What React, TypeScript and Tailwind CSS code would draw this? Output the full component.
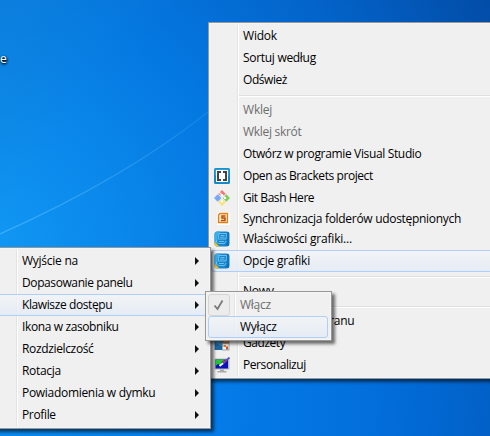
import React from "react";
import { clsx } from "clsx";

type Entry = {
  label: string;
  tracking: string;
  icon?: React.ReactNode;
  disabled?: boolean;
  active?: boolean;
  short?: boolean;
};

function BracketsIcon() {
  return (
    <svg width="16" height="16" viewBox="0 0 16 16">
      <rect width="16" height="16" rx="1.5" fill="#1689cb" />
      <rect x="0.700" y="0.700" width="14.600" height="7" rx="1" fill="#27a2dc" />
      <rect x="2" y="2" width="12" height="12" fill="#fff" />
      <path d="M7 4H4v8h3M9 4h3v8H9" fill="none" stroke="#444" strokeWidth="2" />
    </svg>
  );
}

function GitIcon() {
  return (
    <svg width="16" height="16" viewBox="0 0 16 16">
      <path d="M8 0l3.700 3.700L8 7.400 4.300 3.700z" fill="#f5777a" />
      <path d="M12.300 4.300L16 8l-3.700 3.700L8.600 8z" fill="#7fcb58" />
      <path d="M8 8.600l3.700 3.700L8 16l-3.700-3.700z" fill="#ffdf70" />
      <path d="M3.700 4.300L7.400 8l-3.700 3.700L0 8z" fill="#75a9f9" />
      <path d="M5 2L8 5v7M8 5l3.500 3.500" fill="none" stroke="#f0f0f0" strokeWidth="1.400" />
      <circle cx="8" cy="5.300" r="1.300" fill="#fff" />
      <circle cx="11" cy="8" r="1.300" fill="#fff" />
      <circle cx="8" cy="11.500" r="1.300" fill="#fff" />
    </svg>
  );
}

function SyncIcon() {
  return (
    <svg width="16" height="16" viewBox="0 0 16 16">
      <rect x="3" y="1" width="13" height="13" fill="#fff" />
      <path d="M6 2.500h7.500v9h-9V4z" fill="#ffe9c4" stroke="#e67e14" strokeWidth="1.300" />
      <path d="M11.500 4.900H8v2.200h3v2.300H7" fill="none" stroke="#bd4b0c" strokeWidth="1.500" />
    </svg>
  );
}

function GraphicsIcon() {
  return (
    <svg width="16" height="16" viewBox="0 0 16 16">
      <rect x="0.500" y="0.500" width="15" height="15" rx="3" fill="#1686cf" />
      <path d="M0.500 5V3.500q0-3 3-3H6L3.500 6 3 12l-2.500-1z" fill="#38aee9" />
      <path d="M0.500 10.500L5.500 15.500H3q-2.500 0-2.500-2.500z" fill="#eabf35" />
      <path d="M14 1v14M11.500 14.500l3-3" stroke="#0964ad" strokeWidth="1" />
      <path d="M5 2.500h7.500L12 8H4.300zM6.500 4.500h4M6 6.200h4.500M3 8.500l-.5 2.500 2 1.500h6l1.500-2.500M5 10.500h5" fill="none" stroke="#84cdf2" strokeWidth="0.800" />
    </svg>
  );
}

function GadgetsIcon() {
  return (
    <svg width="16" height="16" viewBox="0 0 16 16">
      <rect x="0.500" y="1" width="11" height="14" fill="#1d659e" />
      <path d="M1 2h7v9L1 8z" fill="#388abb" />
      <rect x="9" y="2" width="6" height="5.500" fill="#ed9653" stroke="#cf6d2c" />
      <rect x="8.500" y="8.500" width="6.500" height="6.500" fill="#eef3f7" stroke="#92a7b5" />
      <rect x="9.500" y="10" width="2.500" height="2" fill="#e87622" />
      <rect x="12" y="11.500" width="2" height="3" fill="#d94a24" />
    </svg>
  );
}

function PersonalizeIcon() {
  return (
    <svg width="16" height="16" viewBox="0 0 16 16">
      <rect x="0.500" y="1.500" width="15" height="11" fill="#b8bab8" />
      <rect x="1.500" y="2.500" width="12.500" height="9" fill="#0c12b5" />
      <path d="M1.500 2.500h9L8 5 6 8 4 7 1.500 9z" fill="#20c633" />
      <path d="M15.500 0.500L9 6.500" stroke="#5d50bd" strokeWidth="1.800" />
      <path d="M10.500 3.500L9 5" stroke="#d83446" strokeWidth="1.800" />
      <path d="M9 6.300L5.500 9" stroke="#fff" strokeWidth="1.800" />
      <path d="M6 12.500h4v1.500h2.500v1.500h-9V14H6z" fill="#a9aaa9" />
    </svg>
  );
}

function Wallpaper() {
  return (
    <svg className="absolute inset-0" width="490" height="436" viewBox="0 0 490 436">
      <defs>
        <radialGradient id="sky" gradientUnits="userSpaceOnUse" cx="-30" cy="250" r="600">
          <stop offset="0" stopColor="#129af5" />
          <stop offset="0.220" stopColor="#0b8aec" />
          <stop offset="0.450" stopColor="#0478e1" />
          <stop offset="0.700" stopColor="#0364ca" />
          <stop offset="1" stopColor="#0249a2" />
        </radialGradient>
        <linearGradient id="corner" gradientUnits="userSpaceOnUse" x1="0" x2="110" y1="0" y2="90">
          <stop offset="0" stopColor="#1484d8" stopOpacity="0.500" />
          <stop offset="1" stopColor="#1484d8" stopOpacity="0" />
        </linearGradient>
        <linearGradient id="floor" gradientUnits="userSpaceOnUse" x1="0" x2="500" y1="400" y2="440">
          <stop offset="0" stopColor="#0a8aee" />
          <stop offset="0.450" stopColor="#047be8" />
          <stop offset="0.750" stopColor="#026edb" />
          <stop offset="1" stopColor="#025fc5" />
        </linearGradient>
        <linearGradient id="streak" x1="0" x2="1" y1="0" y2="0">
          <stop offset="0" stopColor="#46b7fa" stopOpacity="0.800" />
          <stop offset="1" stopColor="#3c9ff0" stopOpacity="0.300" />
        </linearGradient>
      </defs>
      <rect width="490" height="436" fill="url(#sky)" />
      <rect width="490" height="240" fill="url(#corner)" />
      <rect y="370" width="490" height="66" fill="url(#floor)" />
      <path d="M0 234Q125 178 208 112" fill="none" stroke="url(#streak)" strokeWidth="1.300" />
    </svg>
  );
}

function Label({ entry }: { entry: Entry }) {
  return (
    <span className={clsx("whitespace-pre", entry.tracking, entry.disabled ? "text-[#6d6d6d]" : "text-black")}>
      {entry.label}
    </span>
  );
}

function Separator() {
  return (
    <div className="h-2 pt-1 pl-[28px]">
      <div className="h-[2px] border-t border-b border-t-[#e0e0e0] border-b-white" />
    </div>
  );
}

function Gutter({ className }: { className: string }) {
  return <div className={clsx("absolute top-[2px] bottom-[2px] w-[2px] border-r border-l border-r-white border-l-[#e2e3e3]", className)} />;
}

const highlight = "border-[#aecff7] bg-linear-to-b from-[#f2f4f6]/80 to-[#e3ebf7]/80";

const groups: Entry[][] = [
  [
    { label: "Widok", tracking: "tracking-[-0.2px]" },
    { label: "Sortuj według", tracking: "tracking-[-0.3px]" },
    { label: "Odśwież", tracking: "tracking-[-0.45px]" },
  ],
  [
    { label: "Wklej", tracking: "tracking-[-0.2px]", disabled: true },
    { label: "Wklej skrót", tracking: "tracking-[-0.3px]", disabled: true },
    { label: "Otwórz w programie Visual Studio", tracking: "tracking-[-0.35px]" },
    { label: "Open as Brackets project", tracking: "tracking-[-0.42px]", icon: <BracketsIcon /> },
    { label: "Git Bash Here", tracking: "tracking-[-0.45px]", icon: <GitIcon /> },
    { label: "Synchronizacja folderów udostępnionych", tracking: "tracking-[-0.3px]", icon: <SyncIcon />, short: true },
    { label: "Właściwości grafiki...", tracking: "tracking-[-0.2px]", icon: <GraphicsIcon /> },
    { label: "Opcje grafiki", tracking: "tracking-[-0.22px]", icon: <GraphicsIcon />, active: true },
  ],
  [{ label: "Nowy", tracking: "tracking-[-0.2px]" }],
  [
    { label: "Rozdzielczość ekranu", tracking: "tracking-[-0.37px]" },
    { label: "Gadżety", tracking: "tracking-[-0.45px]", icon: <GadgetsIcon /> },
    { label: "Personalizuj", tracking: "tracking-[-0.42px]", icon: <PersonalizeIcon /> },
  ],
];

const graphicsEntries: Entry[] = [
  { label: "Wyjście na", tracking: "tracking-[-0.25px]" },
  { label: "Dopasowanie panelu", tracking: "tracking-[-0.4px]" },
  { label: "Klawisze dostępu", tracking: "tracking-[-0.4px]", active: true },
  { label: "Ikona w zasobniku", tracking: "tracking-[-0.38px]" },
  { label: "Rozdzielczość", tracking: "tracking-[-0.35px]" },
  { label: "Rotacja", tracking: "tracking-[-0.3px]" },
  { label: "Powiadomienia w dymku", tracking: "tracking-[-0.3px]" },
  { label: "Profile", tracking: "tracking-[-0.35px]" },
];

const panel = "absolute border border-[#979797] bg-[#f0f0f0] ring-1 ring-inset ring-[#f5f5f5] shadow-[3px_3px_3px_rgba(0,0,0,0.55)]";

export default function App() {
  return (
    <main className="relative h-[436px] w-[490px] overflow-hidden bg-[#087fe5] font-['Open_Sans','Noto_Sans',sans-serif] text-[12px] leading-[22px]">
      <Wallpaper />
      <span className="absolute top-[48px] left-0 text-white [text-shadow:1px_1px_2px_#000,0_1px_3px_#000]">e</span>

      <nav className={clsx(panel, "top-[22px] left-[208px] h-[357px] w-[290px] px-[2px] pt-[2px]")}>
        <Gutter className="left-[28px]" />
        <div className="relative">
          {groups.map((group, index) => (
            <React.Fragment key={index}>
              {index > 0 && <Separator />}
              {group.map((entry) => (
                <div
                  key={entry.label}
                  className={clsx(
                    "flex items-center rounded-[3px] border pl-[2px]",
                    entry.short ? "h-[19px]" : "h-[22px]",
                    entry.active ? highlight : "border-transparent",
                  )}
                >
                  <span className="w-[29px] shrink-0">{entry.icon}</span>
                  <Label entry={entry} />
                </div>
              ))}
            </React.Fragment>
          ))}
        </div>
      </nav>

      <nav className={clsx(panel, "top-[247px] left-[-20px] h-[182px] w-[231px] px-[2px] pt-[2px]")}>
        <Gutter className="left-[35px]" />
        <div className="relative">
          {graphicsEntries.map((entry) => (
            <div
              key={entry.label}
              className={clsx(
                "flex h-[22px] items-center justify-between rounded-[3px] border pr-[8px] pl-[38px]",
                entry.active ? highlight : "border-transparent",
              )}
            >
              <Label entry={entry} />
              <svg width="4" height="8" viewBox="0 0 4 8" className="shrink-0">
                <path d="M0 0l4 4-4 4z" fill="#111" />
              </svg>
            </div>
          ))}
        </div>
      </nav>

      <nav className={clsx(panel, "top-[291px] left-[205px] h-[50px] w-[127px] p-[2px]")}>
        <Gutter className="left-[28px]" />
        <div className="relative">
          <div className="flex h-[22px] items-center">
            <span className="flex h-[22px] w-[22px] items-center justify-center rounded-[3px] border border-[#d5d5d5] bg-[#ececec]">
              <svg width="12" height="12" viewBox="0 0 12 12">
                <path d="M1.500 6.500L4.500 10 9.500 1.500" fill="none" stroke="#777" strokeWidth="1.700" />
              </svg>
            </span>
            <span className="ml-[10px] flex">
              <Label entry={{ label: "Włącz", tracking: "tracking-[-0.25px]", disabled: true }} />
            </span>
          </div>
          <div className={clsx("mr-px flex h-[22px] items-center rounded-[3px] border pl-[31px]", highlight)}>
            <Label entry={{ label: "Wyłącz", tracking: "tracking-[-0.25px]" }} />
          </div>
        </div>
      </nav>
    </main>
  );
}
